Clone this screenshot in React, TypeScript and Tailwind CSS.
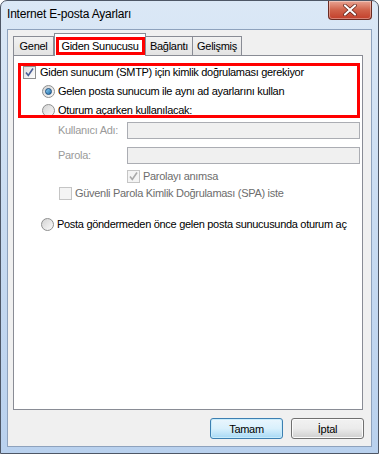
import React from "react";

const font = { fontFamily: '"Liberation Sans", Arial, sans-serif' };

function CheckBox({ checked, disabled }: { checked?: boolean; disabled?: boolean }) {
  return (
    <span
      className={`relative inline-flex h-[13px] w-[13px] shrink-0 items-center justify-center border ${
        disabled ? "border-[#c5c5c5] bg-[#f4f4f4]" : "border-[#8e8f8f] bg-gradient-to-br from-[#dcdcdc] to-[#ffffff]"
      }`}
    >
      {checked && (
        <svg width="11" height="11" viewBox="0 0 11 11">
          <path
            d="M2 5.5 L4.3 8.5 L9 1.5"
            fill="none"
            stroke={disabled ? "#a9a9a9" : "#4a5f97"}
            strokeWidth="1.6"
          />
        </svg>
      )}
    </span>
  );
}

function Radio({ checked }: { checked?: boolean }) {
  return (
    <span className="inline-flex h-[13px] w-[13px] shrink-0 items-center justify-center rounded-full border border-[#8e8f8f] bg-gradient-to-br from-[#d3d3d3] to-[#fbfbfb]">
      {checked && (
        <span className="h-[7px] w-[7px] rounded-full border border-[#1b4c7c] bg-gradient-to-br from-[#8bd0f5] to-[#1f6ea8]" />
      )}
    </span>
  );
}

export default function App() {
  return (
    <div
      className="flex h-[454px] w-[379px] flex-col overflow-hidden whitespace-nowrap rounded-t-[7px] border border-[#4e5766] bg-gradient-to-b from-[#dbe8f6] via-[#c8dbf1] to-[#b9d1ee] text-[11px] tracking-[-0.3px] text-black"
      style={font}
    >
      {/* Title bar */}
      <div className="flex h-[28px] shrink-0 items-start justify-between">
        <span className="pl-[6px] pt-[5px] text-[12px] leading-[16px] tracking-[-0.2px] text-black">Internet E-posta Ayarları</span>
        <div className="mr-[6px] flex h-[19px] w-[44px] items-center justify-center rounded-b-[4px] border border-t-0 border-[#6b2b22] bg-gradient-to-b from-[#e8a493] via-[#d0624a] to-[#c23e2a] shadow-[inset_0_0_0_1px_rgba(255,255,255,0.35)]">
          <svg width="14" height="12" viewBox="0 0 14 12">
            <path d="M2 1.5 L12 10.5 M12 1.5 L2 10.5" stroke="#5a1e16" strokeWidth="3.6" strokeLinecap="round" />
            <path d="M2 1.5 L12 10.5 M12 1.5 L2 10.5" stroke="#ffffff" strokeWidth="2.2" strokeLinecap="round" />
          </svg>
        </div>
      </div>

      {/* Client area */}
      <div className="mx-[6px] mb-[6px] flex flex-1 flex-col border border-[#8ea2bd] bg-[#f0f0f0]">
        {/* Tabs */}
        <div className="flex h-[25px] shrink-0 items-end pl-[5px]">
          <div className="flex h-[19px] w-[41px] items-center justify-center border border-b-0 border-[#898c95] bg-gradient-to-b from-[#f2f2f2] to-[#e3e3e3]">
            Genel
          </div>
          <div className="relative z-10 -mb-px flex h-[23px] w-[92px] items-start justify-center border border-b-0 border-[#898c95] bg-white pt-[3px]">
            <span className="flex h-[18px] w-[89px] items-center justify-center border-[3px] border-[#ff0000] leading-[12px]">
              Giden Sunucusu
            </span>
          </div>
          <div className="flex h-[19px] w-[47px] items-center justify-center border border-b-0 border-l-0 border-[#898c95] bg-gradient-to-b from-[#f2f2f2] to-[#e3e3e3]">
            Bağlantı
          </div>
          <div className="flex h-[19px] w-[49px] items-center justify-center border border-b-0 border-l-0 border-[#898c95] bg-gradient-to-b from-[#f2f2f2] to-[#e3e3e3]">
            Gelişmiş
          </div>
        </div>

        {/* Tab panel */}
        <div className="ml-[5px] mr-[8px] flex h-[355px] flex-col overflow-hidden border border-[#898c95] bg-white pl-[4px] pr-[2px] pt-[7px]">
          <div className="flex flex-col border-[3px] border-[#ff0000] pl-[2px]">
            <div className="flex h-[13px] items-center gap-[4px]">
              <CheckBox checked />
              <span>Giden sunucum (SMTP) için kimlik doğrulaması gerekiyor</span>
            </div>
            <div className="mt-[3px] flex h-[19px] items-center gap-[3px] pl-[19px]">
              <Radio checked />
              <span>Gelen posta sunucum ile aynı ad ayarlarını kullan</span>
            </div>
            <div className="flex h-[14px] items-start gap-[3px] overflow-hidden pl-[19px] pt-[3px]">
              <Radio />
              <span className="leading-[13px]">Oturum açarken kullanılacak:</span>
            </div>
          </div>

          <div className="mt-[4px] flex h-[17px] items-center pl-[40px] text-[#9a9a9a]">
            <span className="w-[69px]">Kullanıcı Adı:</span>
            <div className="h-[17px] flex-1 border border-[#abadb3] bg-[#f0f0f0]" />
          </div>
          <div className="mt-[8px] flex h-[17px] items-center pl-[40px] text-[#9a9a9a]">
            <span className="w-[69px]">Parola:</span>
            <div className="h-[17px] flex-1 border border-[#abadb3] bg-[#f0f0f0]" />
          </div>
          <div className="mt-[4px] flex h-[16px] items-center gap-[3px] pl-[109px]">
            <CheckBox checked disabled />
            <span className="text-[#6d6d6d]">Parolayı anımsa</span>
          </div>
          <div className="mt-[1px] flex h-[16px] items-center gap-[3px] pl-[41px]">
            <CheckBox disabled />
            <span className="text-[#6d6d6d]">Güvenli Parola Kimlik Doğrulaması (SPA) iste</span>
          </div>
          <div className="mt-[15px] flex h-[16px] items-center gap-[3px] pl-[23px]">
            <Radio />
            <span>Posta göndermeden önce gelen posta sunucusunda oturum aç</span>
          </div>
        </div>

        {/* Buttons */}
        <div className="mt-[8px] flex justify-end gap-[8px] pr-[7px]">
          <button className="h-[21px] w-[73px] rounded-[3px] border border-[#3c7fb1] bg-gradient-to-b from-[#eaf6fd] via-[#d9f0fc] to-[#a7d9f5] leading-[18px] shadow-[inset_0_0_0_1px_#c9ecfb]">
            Tamam
          </button>
          <button className="h-[21px] w-[73px] rounded-[3px] border border-[#707070] bg-gradient-to-b from-[#f2f2f2] via-[#ebebeb] to-[#cfcfcf] leading-[18px] shadow-[inset_0_0_0_1px_#fbfbfb]">
            İptal
          </button>
        </div>
      </div>
    </div>
  );
}
